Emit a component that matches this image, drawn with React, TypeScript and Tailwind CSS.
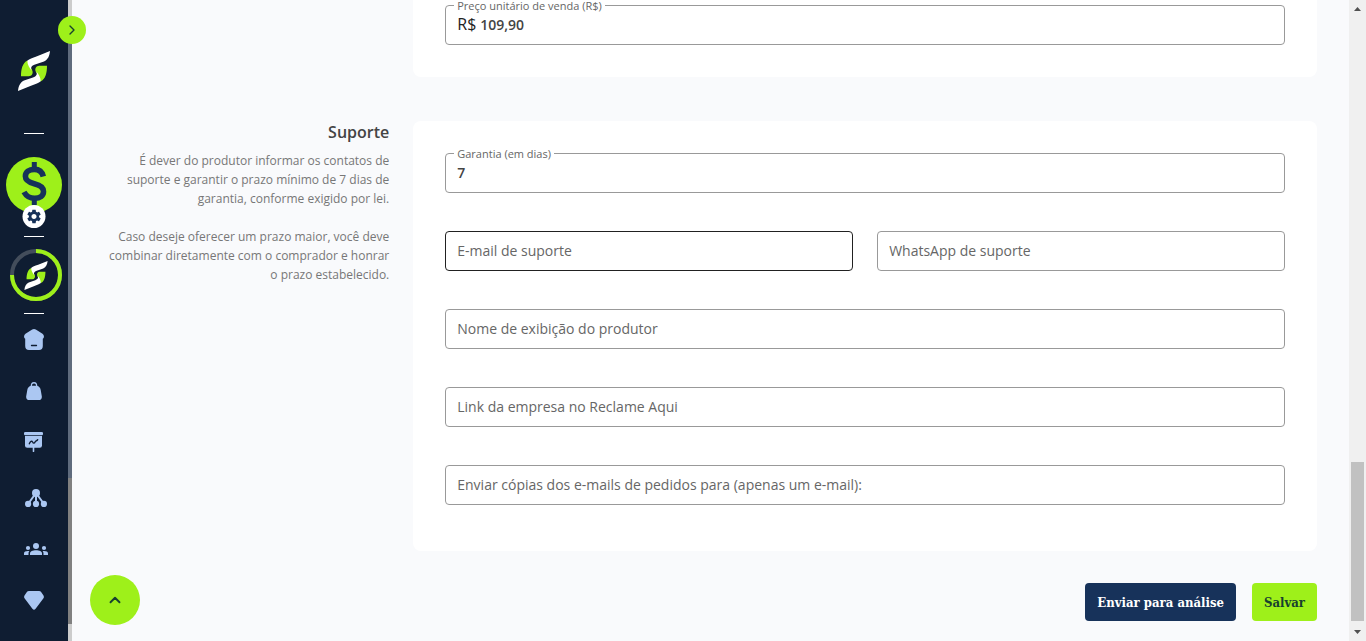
import React from 'react';
import { ChevronRight, ChevronUp } from 'lucide-react';

interface FieldProps {
  id: string;
  label: string;
  value?: string;
  prefix?: string;
  type?: string;
  active?: boolean;
}

const Field: React.FC<FieldProps> = ({ id, label, value, prefix, type = 'text', active = false }) => (
  <div className={`relative flex h-10 items-center rounded border px-[11px] pb-0.5 ${active ? 'border-[#212121]' : 'border-[#999999]'}`}>
    {value !== undefined && (
      <label htmlFor={id} className="absolute -top-1.5 left-2 bg-white px-[3px] text-[11px] leading-3 text-[#666666]">{label}</label>
    )}
    {prefix && <span className="mr-1 text-base text-[#222222]">{prefix}</span>}
    <input
      id={id}
      type={type}
      defaultValue={value}
      placeholder={value === undefined ? label : undefined}
      aria-label={label}
      className="h-full w-full min-w-0 bg-transparent text-sm font-semibold text-[#444444] outline-none placeholder:font-normal placeholder:text-[#666666]"
    />
  </div>
);

const LogoMark = ({ className }: { className: string }) => (
  <svg viewBox="0 0 32 40" className={className} aria-hidden="true">
    <path d="M9.5 9.5C4.5 12 3 18 3 25.3H10.8C13.8 25.3 15.3 22.5 14.4 19.8L13 17Z" fill="#9ef01a" />
    <path d="M32 0C31.5 5 30 8.5 26 10.5L17 13.6C13.5 14.8 12.5 16.5 13.6 19.5C11.6 17 9.4 14 9.3 9.7C11.5 8 14 7 19 5.3Z" fill="#fff" />
    <path d="M22.5 30.5C27.5 28 29 22 29 14.7H21.2C18.2 14.7 16.7 17.5 17.6 20.2L19 23Z" fill="#9ef01a" />
    <path d="M0 40C.5 35 2 31.5 6 29.5L15 26.4C18.5 25.2 19.5 23.5 18.4 20.5C20.4 23 22.6 26 22.7 30.3C20.5 32 18 33 13 34.7Z" fill="#fff" />
  </svg>
);

const Divider = () => <div className="h-px w-5 shrink-0 bg-white" />;

const HomeIcon = () => (
  <svg viewBox="0 0 20 22" className="h-[22px] w-5" fill="#abc7f2">
    <path d="M8.2 .6Q10 -.5 11.8 .6L18.5 4.8Q20.4 6.3 19.8 8.5Q19.5 9.5 18.8 9.8V17Q18.8 20.9 15 20.9H5Q1.2 20.9 1.2 17V9.8Q.5 9.5 .2 8.5Q-.4 6.3 1.5 4.8Z" />
    <path d="M7.5 16.5H12.5" stroke="#0f1d32" strokeWidth="1.3" strokeLinecap="round" />
  </svg>
);

const BagIcon = () => (
  <svg viewBox="0 0 16 18" className="h-[18px] w-4" fill="#abc7f2">
    <path fillRule="evenodd" d="M8 0C10.4 0 11.2 1.6 11.3 3.8C13.4 4.6 14.3 6 14.7 8L15.8 14.2Q16.2 18 12.6 18H3.4Q-.2 18 .2 14.2L1.3 8C1.7 6 2.6 4.6 4.7 3.8C4.8 1.6 5.6 0 8 0ZM8 1.5C6.7 1.5 6.1 2.3 6 3.8H10C9.9 2.3 9.3 1.5 8 1.5Z" />
  </svg>
);

const BoardIcon = () => (
  <svg viewBox="0 0 20 20" className="h-5 w-5" fill="#abc7f2">
    <rect x="0" y="0" width="19" height="3.2" rx="1.3" />
    <path d="M1 4H18V13.5Q18 15.8 15.8 15.8H3.2Q1 15.8 1 13.5Z" />
    <path d="M9.5 15V19.3" stroke="#abc7f2" strokeWidth="1.6" strokeLinecap="round" />
    <path d="M5.3 11.8C6.3 9.3 7.8 8.6 8.6 10C9.4 11.8 10.7 11.2 11.2 9.8C11.8 8.6 12.8 9.2 13.7 7.6" fill="none" stroke="#0f1d32" strokeWidth="1.3" strokeLinecap="round" />
  </svg>
);

const TreeIcon = () => (
  <svg viewBox="0 0 22 18" className="h-[18px] w-[22px]" fill="#abc7f2">
    <path d="M11 4L3 15M11 4V15M11 4L19 15" stroke="#abc7f2" strokeWidth="2" />
    <circle cx="11" cy="4" r="4" />
    <circle cx="3.1" cy="14.9" r="3.1" />
    <circle cx="11" cy="14.9" r="3.1" />
    <circle cx="18.9" cy="14.9" r="3.1" />
  </svg>
);

const GroupIcon = () => (
  <svg viewBox="0 0 24 12" className="h-3 w-6" fill="#abc7f2">
    <circle cx="12" cy="3" r="3" />
    <circle cx="4" cy="5" r="2.1" />
    <circle cx="20" cy="5" r="2.1" />
    <path d="M6 12V10.4C6 8.2 8.8 7.2 12 7.2S18 8.2 18 10.4V12Z" />
    <path d="M0 12V10.4C0 8.7 1.7 8 4 8L5.4 8.1C4.8 8.8 4.5 9.5 4.5 10.4V12Z" />
    <path d="M24 12V10.4C24 8.7 22.3 8 20 8L18.6 8.1C19.2 8.8 19.5 9.5 19.5 10.4V12Z" />
  </svg>
);

const DiamondIcon = () => (
  <svg viewBox="0 0 20 19" className="h-[19px] w-5" fill="#abc7f2">
    <path d="M5 0H15Q16.5 0 17.3 1.2L19.5 4.6Q20.4 6.1 19.3 7.5L11.6 17.7Q10 19.7 8.4 17.7L.7 7.5Q-.4 6.1.5 4.6L2.7 1.2Q3.5 0 5 0Z" />
  </svg>
);

const shopLinks = [
  { href: '#painel', label: 'Painel', icon: <HomeIcon /> },
  { href: '#produtos', label: 'Produtos', icon: <BagIcon /> },
  { href: '#relatorios', label: 'Relatórios', icon: <BoardIcon /> },
];

const networkLinks = [
  { href: '#afiliacao', label: 'Afiliação', icon: <TreeIcon />, shift: true },
  { href: '#equipe', label: 'Equipe', icon: <GroupIcon />, shift: true },
  { href: '#premium', label: 'Premium', icon: <DiamondIcon />, shift: false },
];

const Sidebar = () => (
  <aside className="relative flex shrink-0">
    <nav className="flex w-[68px] flex-col items-center overflow-hidden bg-[#0f1d32]">
      <a href="#inicio" aria-label="Início" className="mt-[51px] mb-[42px] shrink-0">
        <LogoMark className="h-10 w-8" />
      </a>
      <Divider />

      <a href="#vendas" aria-label="Vendas" className="relative my-[23px] h-14 w-14 shrink-0 rounded-full bg-[#9ef01a]">
        <svg viewBox="0 0 56 56" className="h-14 w-14" fill="none" stroke="#17325a">
          <path d="M28.3 5V13M28.3 40V48" strokeWidth="5" />
          <path d="M37.3 19.5C36.1 14.5 33 12.4 28.3 12.4C22.8 12.4 19.4 15.2 19.4 19.3C19.4 24 23.4 25.5 28.3 26.7C33.8 28 37.5 29.6 37.5 34.4C37.5 38.7 34 41.3 28.7 41.3C23.5 41.3 20.2 39 18 35" strokeWidth="5.6" />
        </svg>
        <span className="absolute -bottom-[15px] left-1/2 flex h-[23px] w-[23px] -translate-x-1/2 items-center justify-center rounded-full bg-white">
          <svg viewBox="0 0 24 24" className="h-[17px] w-[17px]" fill="#17325a">
            <path d="M19.14 12.94c.04-.3.06-.61.06-.94 0-.32-.02-.64-.07-.94l2.03-1.58c.18-.14.23-.41.12-.61l-1.92-3.32c-.12-.22-.37-.29-.59-.22l-2.39.96c-.5-.38-1.03-.7-1.62-.94l-.36-2.54c-.04-.24-.24-.41-.48-.41h-3.84c-.24 0-.43.17-.47.41l-.36 2.54c-.59.24-1.13.57-1.62.94l-2.39-.96c-.22-.08-.47 0-.59.22L2.74 8.87c-.12.21-.08.47.12.61l2.03 1.58c-.05.3-.09.63-.09.94s.02.64.07.94l-2.03 1.58c-.18.14-.23.41-.12.61l1.92 3.32c.12.22.37.29.59.22l2.39-.96c.5.38 1.03.7 1.62.94l.36 2.54c.05.24.24.41.48.41h3.84c.24 0 .44-.17.47-.41l.36-2.54c.59-.24 1.13-.56 1.62-.94l2.39.96c.22.08.47 0 .59-.22l1.92-3.32c.12-.22.07-.47-.12-.61l-2.01-1.58zM12 15.6c-1.98 0-3.6-1.62-3.6-3.6s1.62-3.6 3.6-3.6 3.6 1.62 3.6 3.6-1.62 3.6-3.6 3.6z" />
          </svg>
        </span>
      </a>
      <Divider />

      <a href="#conquistas" aria-label="Conquistas" className="my-3 grid shrink-0 place-items-center pl-1">
        <svg viewBox="0 0 52 52" className="col-start-1 row-start-1 h-[52px] w-[52px]" fill="none">
          <circle cx="26" cy="26" r="24" stroke="#434d5b" strokeWidth="4" />
          <path d="M26 2A24 24 0 1 1 2 26" stroke="#9ef01a" strokeWidth="4" />
        </svg>
        <LogoMark className="col-start-1 row-start-1 h-[29px] w-6" />
      </a>
      <Divider />

      <ul className="mt-[14px] flex shrink-0 flex-col gap-[27px]">
        {shopLinks.map(item => (
          <li key={item.href}>
            <a href={item.href} aria-label={item.label} className="flex h-6 w-7 items-center justify-center">{item.icon}</a>
          </li>
        ))}
      </ul>
      <ul className="mt-8 flex shrink-0 flex-col gap-[27px]">
        {networkLinks.map(item => (
          <li key={item.href}>
            <a href={item.href} aria-label={item.label} className={`flex h-6 w-7 items-center justify-center ${item.shift ? 'pl-1' : ''}`}>{item.icon}</a>
          </li>
        ))}
      </ul>
    </nav>

    {/* thin scroll track of the menu */}
    <div className="flex w-1 flex-col bg-[#cccccc] pt-7 pb-[17px]">
      <div className="flex-1 bg-[#5f6b7d]" />
      <div className="h-[146px] bg-[#808080]" />
    </div>

    <button type="button" aria-label="Expandir menu" className="absolute top-4 -right-[14px] flex h-7 w-7 items-center justify-center rounded-full bg-[#9ef01a] text-[#17402f]">
      <ChevronRight size={16} />
    </button>
  </aside>
);

const PageScrollbar = () => (
  <div className="flex w-[17px] shrink-0 flex-col items-center bg-[#f0f0f0]" aria-hidden="true">
    <svg viewBox="0 0 17 17" className="h-[17px] w-[17px]" fill="#505050"><path d="M5 11L8.5 7L12 11Z" /></svg>
    <div className="flex-1" />
    <div className="h-[159px] w-[13px] bg-[#c1c1c1]" />
    <svg viewBox="0 0 17 20" className="h-5 w-[17px]" fill="#505050"><path d="M5 9L8.5 13L12 9Z" /></svg>
  </div>
);

const App: React.FC = () => (
  <div className="relative flex h-screen overflow-hidden bg-[#f9fafc] font-['Open_Sans','Noto_Sans',sans-serif]">
    <Sidebar />

    <main className="min-w-0 flex-1 overflow-hidden px-8">
      <section className="grid grid-cols-4 gap-x-6">
        <div className="col-span-3 col-start-2 rounded-b-lg bg-white px-8 pt-[5px] pb-8">
          <Field id="preco" label="Preço unitário de venda (R$)" prefix="R$" value="109,90" />
        </div>
      </section>

      <section className="mt-11 grid grid-cols-4 gap-x-6">
        <div className="text-right">
          <h2 className="text-base leading-[22px] font-semibold text-[#444444]">Suporte</h2>
          <p className="mt-2 text-xs leading-[19px] text-[#777777]">
            É dever do produtor informar os contatos de suporte e garantir o prazo mínimo de 7 dias de garantia, conforme exigido por lei.
          </p>
          <p className="mt-[19px] text-xs leading-[19px] text-[#777777]">
            Caso deseje oferecer um prazo maior, você deve combinar diretamente com o comprador e honrar o prazo estabelecido.
          </p>
        </div>
        <div className="col-span-3 flex flex-col gap-[38px] rounded-lg bg-white px-8 pt-8 pb-[46px]">
          <Field id="garantia" label="Garantia (em dias)" value="7" />
          <div className="grid grid-cols-2 gap-6">
            <Field id="email" label="E-mail de suporte" type="email" active />
            <Field id="whatsapp" label="WhatsApp de suporte" type="tel" />
          </div>
          <Field id="produtor" label="Nome de exibição do produtor" />
          <Field id="reclame" label="Link da empresa no Reclame Aqui" type="url" />
          <Field id="copias" label="Enviar cópias dos e-mails de pedidos para (apenas um e-mail):" type="email" />
        </div>
      </section>

      <div className="mt-8 flex justify-end gap-4 font-['DejaVu_Serif_Condensed','DejaVu_Serif',serif] text-[13px] font-bold">
        <button type="button" className="h-[38px] rounded bg-[#17325a] px-3 pt-0.5 text-white">Enviar para análise</button>
        <button type="button" className="h-[38px] rounded bg-[#9ef01a] px-3 pt-0.5 text-[#17402f]">Salvar</button>
      </div>
    </main>

    <PageScrollbar />

    <button type="button" aria-label="Voltar ao topo" className="absolute bottom-4 left-[90px] flex h-[50px] w-[50px] items-center justify-center rounded-full bg-[#9ef01a] text-[#17402f]">
      <ChevronUp size={18} strokeWidth={2.5} />
    </button>
  </div>
);

export default App;
